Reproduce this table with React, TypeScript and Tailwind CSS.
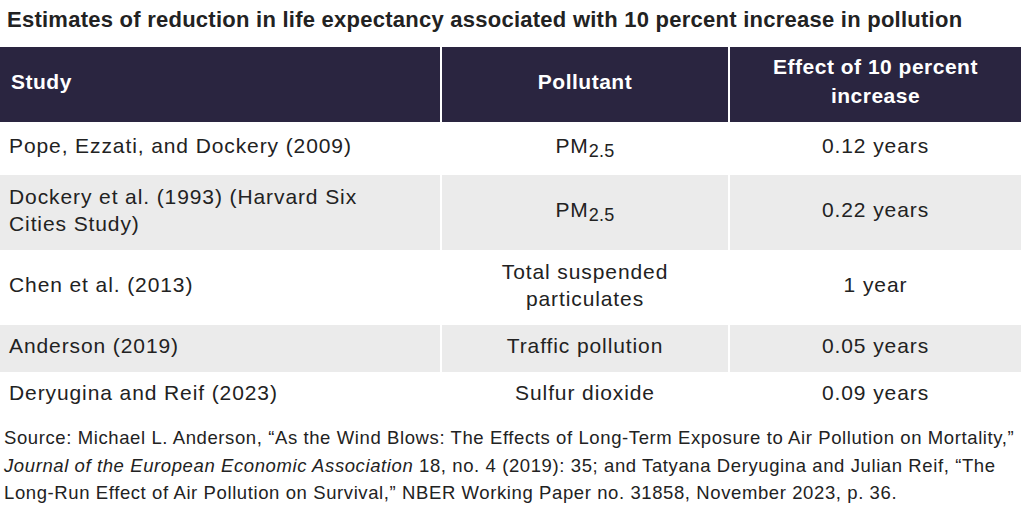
import React from 'react';

const rows = [
  { study: 'Pope, Ezzati, and Dockery (2009)', pollutant: 'pm', effect: '0.12 years', h: 'h-[53px]' },
  { study: 'Dockery et al. (1993) (Harvard Six Cities Study)', pollutant: 'pm', effect: '0.22 years', h: 'h-[75px]' },
  { study: 'Chen et al. (2013)', pollutant: 'Total suspended particulates', effect: '1 year', h: 'h-[75px]' },
  { study: 'Anderson (2019)', pollutant: 'Traffic pollution', effect: '0.05 years', h: 'h-[47px]' },
  { study: 'Deryugina and Reif (2023)', pollutant: 'Sulfur dioxide', effect: '0.09 years', h: 'h-[46px]' },
];

const Pollutant = ({ value }: { value: string }) =>
  value === 'pm' ? (
    <span>
      PM<sub className="text-[18px] relative top-[4px] tracking-[0.3px]">2.5</sub>
    </span>
  ) : (
    <span>{value}</span>
  );

export default function App() {
  return (
    <div className="w-[1024px] h-[512px] bg-white text-[#222] font-['Liberation_Sans',Arial,sans-serif] overflow-hidden">
      <h1 className="pl-[7px] pt-[7px] h-[47px] text-[22px] font-bold tracking-[0.25px] text-[#222] leading-[26px] whitespace-nowrap">
        Estimates of reduction in life expectancy associated with 10 percent increase in pollution
      </h1>
      <table className="w-[1021px] border-collapse table-fixed text-[21px] leading-[27px] tracking-[0.9px]">
        <colgroup>
          <col className="w-[441px]" />
          <col className="w-[288px]" />
          <col className="w-[292px]" />
        </colgroup>
        <thead>
          <tr className="h-[75px] bg-[#2a2540] text-white font-bold">
            <th className="text-left pl-[11px] pr-2 pb-[7px] border-r-2 border-white tracking-[0.5px]">Study</th>
            <th className="text-center px-4 pb-[7px] border-r-2 border-white tracking-[0.5px]">Pollutant</th>
            <th className="text-center px-8 pb-[7px] leading-[29px] tracking-[0.5px]">Effect of 10 percent increase</th>
          </tr>
        </thead>
        <tbody>
          {rows.map((r, i) => (
            <tr key={i} className={`${r.h} ${i % 2 === 1 ? 'bg-[#ebebeb]' : 'bg-white'}`}>
              <td className="pl-[9px] pr-16 pb-[6px] border-r-2 border-white">{r.study}</td>
              <td className="text-center px-12 pb-[6px] border-r-2 border-white">
                <Pollutant value={r.pollutant} />
              </td>
              <td className="text-center pb-[6px]">{r.effect}</td>
            </tr>
          ))}
        </tbody>
      </table>
      <p className="pl-[4px] pt-[6px] pr-1 text-[18.5px] leading-[27.5px] tracking-[0.6px] text-[#222] whitespace-nowrap">
        Source: Michael L. Anderson, “As the Wind Blows: The Effects of Long-Term Exposure to Air Pollution on Mortality,”
        <br />
        <em>Journal of the European Economic Association</em> 18, no. 4 (2019): 35; and Tatyana Deryugina and Julian Reif, “The
        <br />
        Long-Run Effect of Air Pollution on Survival,” NBER Working Paper no. 31858, November 2023, p. 36.
      </p>
    </div>
  );
}
